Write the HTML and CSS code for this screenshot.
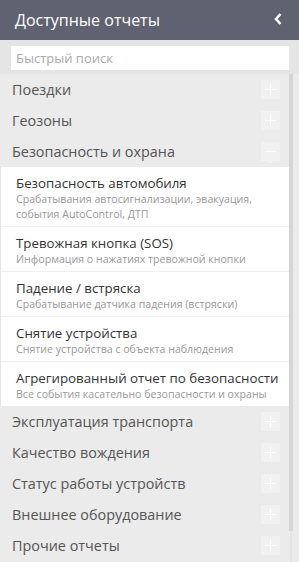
FILE: index.html
```html
<!DOCTYPE html>
<html>
<head>
<meta charset="utf-8">
<link rel="stylesheet" href="styles.css">
</head>
<body>
<div class="panel">
  <div class="header">
    <span class="title">Доступные отчеты</span>
    <svg class="back" width="10" height="14" viewBox="0 0 10 14"><path d="M7.5 2 L3 7 L7.5 12" fill="none" stroke="#fff" stroke-width="2.6"/></svg>
  </div>
  <div class="search"><div class="input">Быстрый поиск</div></div>
  <div class="body">
    <div class="list">
      <div class="cat"><span>Поездки</span><span class="btn plus"></span></div>
      <div class="cat"><span>Геозоны</span><span class="btn plus"></span></div>
      <div class="cat"><span>Безопасность и охрана</span><span class="btn minus"></span></div>
      <div class="subs">
        <div class="sub"><div class="st">Безопасность автомобиля</div><div class="sd">Срабатывания автосигнализации, эвакуация, события AutoControl, ДТП</div></div>
        <div class="sub"><div class="st">Тревожная кнопка (SOS)</div><div class="sd">Информация о нажатиях тревожной кнопки</div></div>
        <div class="sub"><div class="st">Падение / встряска</div><div class="sd">Срабатывание датчика падения (встряски)</div></div>
        <div class="sub"><div class="st">Снятие устройства</div><div class="sd">Снятие устройства с объекта наблюдения</div></div>
        <div class="sub"><div class="st">Агрегированный отчет по безопасности</div><div class="sd">Все события касательно безопасности и охраны</div></div>
      </div>
      <div class="cat"><span>Эксплуатация транспорта</span><span class="btn plus"></span></div>
      <div class="cat"><span>Качество вождения</span><span class="btn plus"></span></div>
      <div class="cat"><span>Статус работы устройств</span><span class="btn plus"></span></div>
      <div class="cat"><span>Внешнее оборудование</span><span class="btn plus"></span></div>
      <div class="cat"><span>Прочие отчеты</span><span class="btn plus"></span></div>
    </div>
    <div class="scroll"><div class="thumb"></div><div class="track"></div></div>
  </div>
</div>
</body>
</html>
```
FILE: styles.css
```css
html, body { margin: 0; padding: 0; }
body { width: 299px; height: 562px; overflow: hidden; background: #ebebeb; font-family: "Open Sans", "Noto Sans", sans-serif; }
.panel { display: flex; flex-direction: column; height: 562px; }
.header { height: 40px; background: #5f6270; display: flex; align-items: center; justify-content: space-between; padding: 0 16px 0 15px; box-sizing: border-box; }
.title { color: #fff; font-size: 16px; }
.back { display: block; margin-top: -2px; }
.search { background: #e5e5e5; height: 34px; padding: 6px 10px 0 11px; box-sizing: border-box; }
.input { background: #fff; width: 278px; height: 24px; box-sizing: border-box; padding-left: 5px; font-size: 13px; color: #aaa; line-height: 24px; }
.body { display: flex; flex: 1; min-height: 0; }
.list { width: 289px; }
.cat { height: 31px; display: flex; align-items: center; justify-content: space-between; padding: 0 9px 0 12px; box-sizing: border-box; font-size: 14.4px; color: #555; background: #ebebeb; }
.btn { width: 19px; height: 19px; background: #f1f1f1; position: relative; }
.btn::before { content: ""; position: absolute; left: 4px; top: 9px; width: 11px; height: 1px; background: #fff; }
.plus::after { content: ""; position: absolute; left: 9px; top: 4px; width: 1px; height: 11px; background: #fff; }
.minus::after { content: ""; position: absolute; left: 6px; top: 19px; border-left: 3px solid transparent; border-right: 3px solid transparent; border-top: 3px solid #f1f1f1; }
.subs { background: #fff; border-left: 1px solid #e5e5e5; }
.sub { padding: 7px 8px 4px 15px; border-top: 1px solid #f0f0f0; }
.sub:first-child { border-top: none; }
.st { font-size: 13.3px; color: #333; line-height: 18px; }
.sd { font-size: 10.6px; color: #999; line-height: 15px; }
.scroll { width: 4px; display: flex; flex-direction: column; }
.thumb { height: 457px; background: #d5d5d5; }
.track { flex: 1; margin: 0 1px; background: #e3e3e3; }
```
